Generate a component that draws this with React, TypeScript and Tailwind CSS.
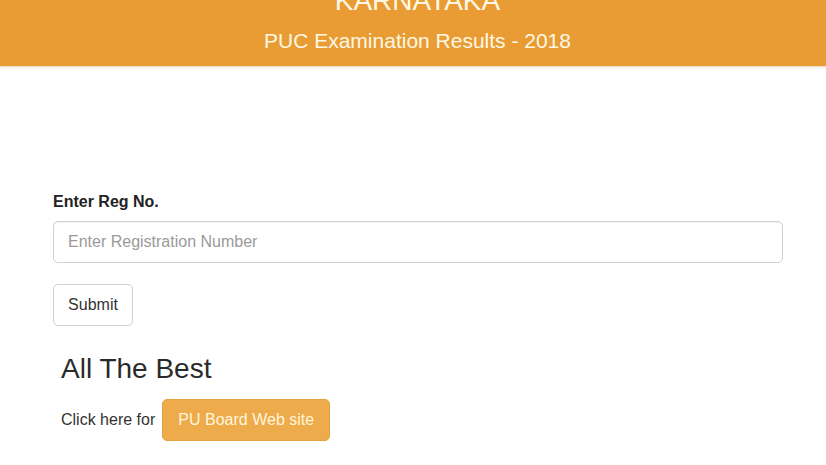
export default function App() {
  return (
    <div className="min-h-[465px] w-full bg-white font-['Liberation_Sans',Arial,sans-serif] text-[#333]">
      {/* Header */}
      <div className="relative h-[66px] overflow-hidden bg-[#e89c33] pl-[9px] text-center text-[#fff8e4] shadow-[0_1px_2px_rgba(180,120,40,0.35)]">
        <div className="-mt-[15px] text-[28px] leading-[32px]">KARNATAKA</div>
        <div className="mt-[12px] text-[21px] leading-[24px]">PUC Examination Results - 2018</div>
      </div>

      {/* Form */}
      <div className="ml-[53px] w-[730px] pt-[126px]">
        <label className="mb-[9px] block text-[16px] font-bold leading-[20px] text-[#222]">Enter Reg No.</label>
        <input
          type="text"
          placeholder="Enter Registration Number"
          className="block h-[42px] w-full rounded-[5px] border border-[#d0d0d0] bg-white px-[14px] text-[16px] text-[#555] shadow-[inset_0_1px_1px_rgba(0,0,0,0.06)] outline-none placeholder:text-[#9a9a9a]"
        />
        <button className="mt-[21px] h-[42px] w-[80px] rounded-[5px] border border-[#d0d0d0] bg-white text-[16px] text-[#333]">
          Submit
        </button>

        <div className="ml-[8px] mt-[27px]">
          <h2 className="text-[28px] leading-[32px] text-[#2a2a2a]">All The Best</h2>
          <div className="mt-[14px] flex items-center text-[16px]">
            <span className="text-[#333]">Click here for</span>
            <a className="ml-[7px] flex h-[42px] w-[168px] items-center justify-center rounded-[5px] border border-[#e6a040] bg-[#eeab4b] text-[#fff6dc]">
              PU Board Web site
            </a>
          </div>
        </div>
      </div>
    </div>
  );
}
